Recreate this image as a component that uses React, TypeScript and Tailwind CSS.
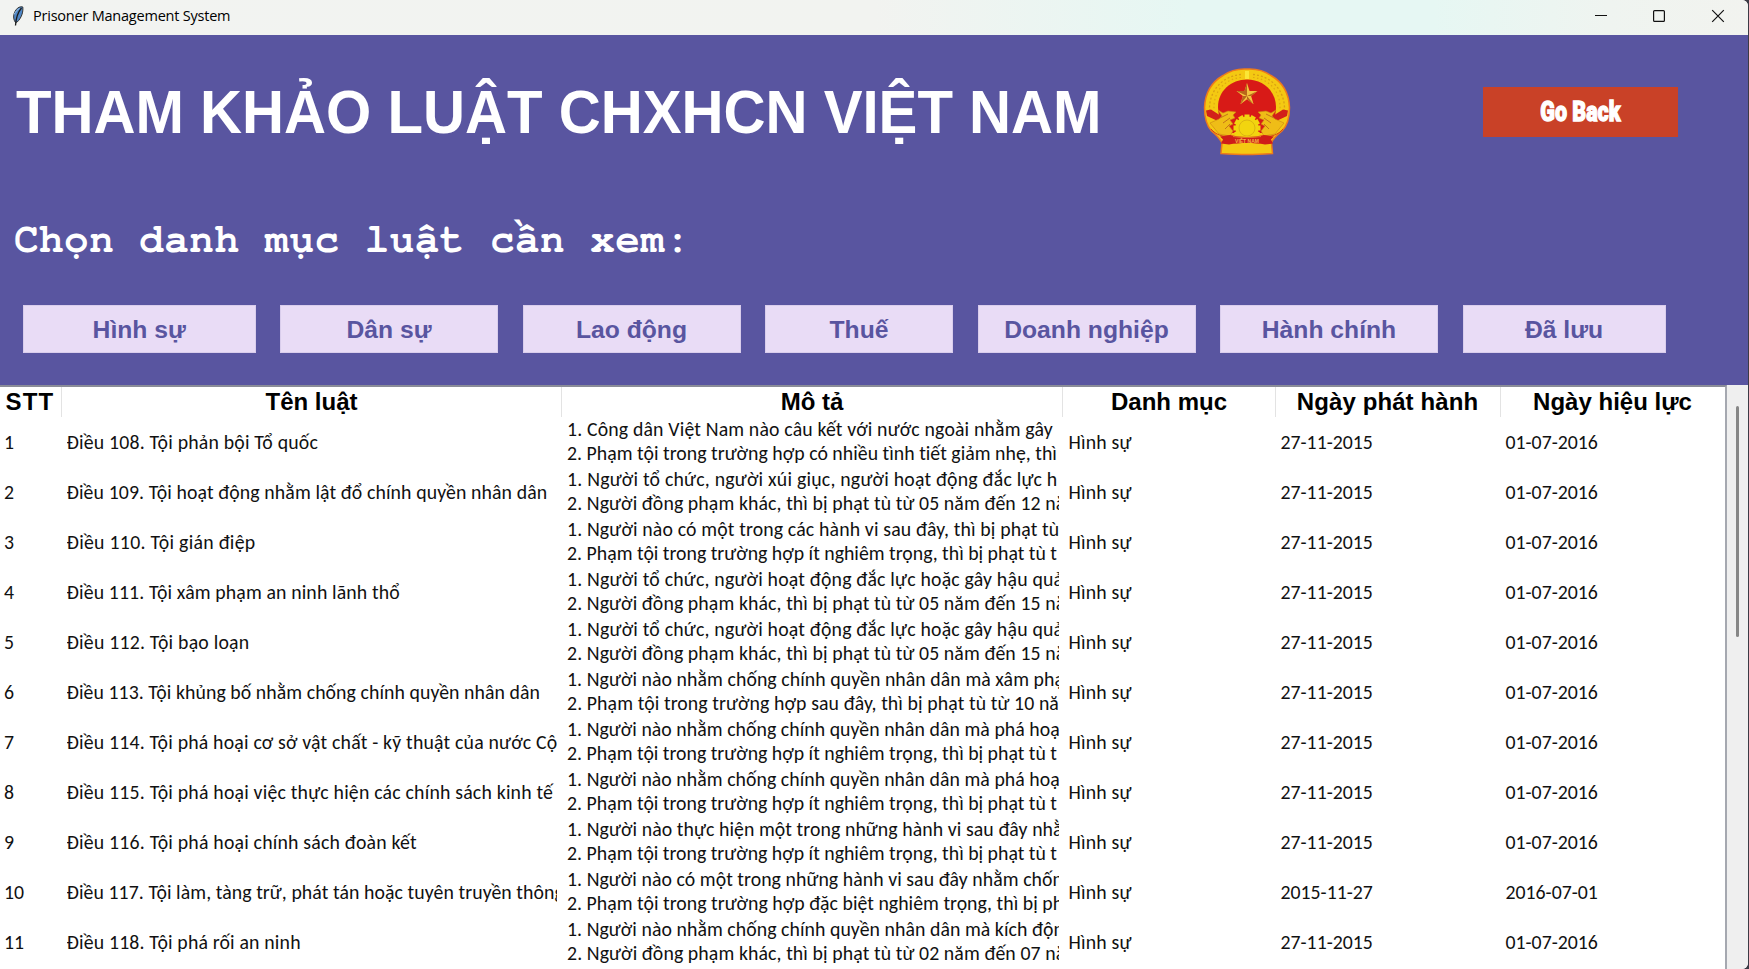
type Law = {
  name: string;
  nameFit: string;
  desc: [string, string];
  descFit: [string, string];
  issued?: string;
  effective?: string;
};

const MINOR = "2. Phạm tội trong trường hợp ít nghiêm trọng, thì bị phạt tù t";

const laws: Law[] = [
  {
    name: "Điều 108. Tội phản bội Tổ quốc",
    nameFit: "tracking-[0.19px]",
    desc: [
      "1. Công dân Việt Nam nào câu kết với nước ngoài nhằm gây",
      "2. Phạm tội trong trường hợp có nhiều tình tiết giảm nhẹ, thì",
    ],
    descFit: ["tracking-[0.16px]", "tracking-[0.03px]"],
  },
  {
    name: "Điều 109. Tội hoạt động nhằm lật đổ chính quyền nhân dân",
    nameFit: "tracking-[0.11px]",
    desc: [
      "1. Người tổ chức, người xúi giục, người hoạt động đắc lực h",
      "2. Người đồng phạm khác, thì bị phạt tù từ 05 năm đến 12 nă",
    ],
    descFit: ["tracking-[0.22px]", "tracking-[0.1px]"],
  },
  {
    name: "Điều 110. Tội gián điệp",
    nameFit: "tracking-[0.29px]",
    desc: ["1. Người nào có một trong các hành vi sau đây, thì bị phạt tù", MINOR],
    descFit: ["tracking-[0.15px]", "tracking-[0.01px]"],
  },
  {
    name: "Điều 111. Tội xâm phạm an ninh lãnh thổ",
    nameFit: "tracking-[0.13px]",
    desc: [
      "1. Người tổ chức, người hoạt động đắc lực hoặc gây hậu quả",
      "2. Người đồng phạm khác, thì bị phạt tù từ 05 năm đến 15 nă",
    ],
    descFit: ["tracking-[0.2px]", "tracking-[0.1px]"],
  },
  {
    name: "Điều 112. Tội bạo loạn",
    nameFit: "tracking-[0.22px]",
    desc: [
      "1. Người tổ chức, người hoạt động đắc lực hoặc gây hậu quả",
      "2. Người đồng phạm khác, thì bị phạt tù từ 05 năm đến 15 nă",
    ],
    descFit: ["tracking-[0.2px]", "tracking-[0.1px]"],
  },
  {
    name: "Điều 113. Tội khủng bố nhằm chống chính quyền nhân dân",
    nameFit: "tracking-[0.07px]",
    desc: [
      "1. Người nào nhằm chống chính quyền nhân dân mà xâm phạ",
      "2. Phạm tội trong trường hợp sau đây, thì bị phạt tù từ 10 nă",
    ],
    descFit: ["tracking-[0.07px]", "tracking-[0.1px]"],
  },
  {
    name: "Điều 114. Tội phá hoại cơ sở vật chất - kỹ thuật của nước Cộ",
    nameFit: "tracking-[0.19px]",
    desc: ["1. Người nào nhằm chống chính quyền nhân dân mà phá hoạ", MINOR],
    descFit: ["tracking-[0.05px]", "tracking-[0.01px]"],
  },
  {
    name: "Điều 115. Tội phá hoại việc thực hiện các chính sách kinh tế",
    nameFit: "tracking-[0.2px]",
    desc: ["1. Người nào nhằm chống chính quyền nhân dân mà phá hoạ", MINOR],
    descFit: ["tracking-[0.05px]", "tracking-[0.01px]"],
  },
  {
    name: "Điều 116. Tội phá hoại chính sách đoàn kết",
    nameFit: "tracking-[0.2px]",
    desc: ["1. Người nào thực hiện một trong những hành vi sau đây nhằ", MINOR],
    descFit: ["tracking-[0.08px]", "tracking-[0.01px]"],
  },
  {
    name: "Điều 117. Tội làm, tàng trữ, phát tán hoặc tuyên truyền thông",
    nameFit: "tracking-[0.08px]",
    desc: [
      "1. Người nào có một trong những hành vi sau đây nhằm chốn",
      "2. Phạm tội trong trường hợp đặc biệt nghiêm trọng, thì bị ph",
    ],
    descFit: ["tracking-[0.06px]", "tracking-[0.03px]"],
    issued: "2015-11-27",
    effective: "2016-07-01",
  },
  {
    name: "Điều 118. Tội phá rối an ninh",
    nameFit: "tracking-[0.17px]",
    desc: [
      "1. Người nào nhằm chống chính quyền nhân dân mà kích độn",
      "2. Người đồng phạm khác, thì bị phạt tù từ 02 năm đến 07 nă",
    ],
    descFit: ["tracking-[0.06px]", "tracking-[0.1px]"],
  },
];

const categories = [
  { label: "Hình sự", box: "w-[232.5px]" },
  { label: "Dân sự", box: "w-[218px]" },
  { label: "Lao động", box: "w-[218px]" },
  { label: "Thuế", box: "w-[188px]" },
  { label: "Doanh nghiệp", box: "w-[218px]" },
  { label: "Hành chính", box: "w-[218px]" },
  { label: "Đã lưu", box: "w-[203px]" },
];

const columns = [
  { label: "STT", size: "text-[24px] tracking-[1.2px] pr-[1px]" },
  { label: "Tên luật", size: "text-[24px]" },
  { label: "Mô tả", size: "text-[24px]" },
  { label: "Danh mục", size: "text-[24px]" },
  { label: "Ngày phát hành", size: "text-[24px] tracking-[0.1px] pr-[1px]" },
  { label: "Ngày hiệu lực", size: "text-[24px] pr-[1px]" },
];

const GRID = "grid grid-cols-[62px_500px_501px_213px_225px_225px]";

function Feather() {
  return (
    <svg className="ml-[11px] h-[20px] w-[14px]" viewBox="0 0 14 20">
      <path d="M4.5 16.500C1.200 12 2.500 6 6.500 2.200 8.500.6 11 .6 11.800 1c.6 5-1.300 11-5.600 15z" fill="#4f86c6" stroke="#333" strokeWidth="1" />
      <path d="M10.500 2C7 6 5 11 4.500 19.500" fill="none" stroke="#1b1b1b" strokeWidth="1.300" />
      <path d="M3.200 8.500C4.500 5.500 6.500 3.500 8.500 2.500" fill="none" stroke="#9cc4ea" strokeWidth="1" />
    </svg>
  );
}

function Emblem() {
  const teeth = Array.from({ length: 12 }, (_, i) => i * 30);
  return (
    <svg className="h-[88px] w-[88px]" viewBox="0 0 88 88">
      <path
        d="M44 1C36 .5 27 2.500 20 7.500 8 14.500 2 26.500 1.500 39.500c0 11 3 19 7 23.500 5 4 8.500 8 10.500 12l-1 10.500c8 .5 17 1 26 1s18-.5 25.500-1l-1-10.500c1-4 5.500-8 10.500-12C83.500 58.500 86.500 50.500 86.500 39.500 86 26.500 80 14.500 68 7.500 61 2.500 52 .5 44 1z"
        fill="#f4c912"
        stroke="#ee7a1c"
        strokeWidth="1.500"
      />
      <path d="M44 11.500C28 11.500 15 23 15 39c0 11 5 20 12 26h34c7-6 12-15 12-26 0-16-13-27.500-29-27.500z" fill="#d81a17" />
      <path d="M44 3v8" stroke="#fbe636" strokeWidth="4" />
      <path d="M38 6.500C20 8 6 22 6.500 42M50 6.500C68 8 82 22 81.500 42" fill="none" stroke="#d99f14" strokeWidth="1.300" strokeDasharray="2 2" />
      <path d="M38 9.500C22 11 10 23 11 42M50 9.500C66 11 78 23 77 42" fill="none" stroke="#e0a812" strokeWidth="1.200" strokeDasharray="1.500 2.500" />
      <path d="M3 42.500l5-1 14 9-3 4.500-15-7zM85 42.500l-5-1-14 9 3 4.500 15-7z" fill="#d2201a" />
      <path
        d="M15 42l5 3 5-2 8 1-3 3 2 3-5 2 3 4-4 2 4 5-3 5-11-2-9-11 9-4 3-3zM73 42l-5 3-5-2-8 1 3 3-2 3 5 2-3 4 4 2-4 5 3 5 11-2 9-11-9-4-3-3z"
        fill="#efbd17"
        stroke="#c98412"
        strokeWidth=".6"
      />
      <path d="M17 50l8-4M20 55l7-5M22 61l5-5M71 50l-8-4M68 55l-7-5M66 61l-5-5" stroke="#c4741a" strokeWidth="1" />
      <polygon points="44,15 46.5,22.900 54.500,22.900 48.100,27.900 50.600,36.300 44,31.300 37.400,36.300 39.900,27.900 33.500,22.900 41.500,22.900" fill="#f4c440" />
      <path d="M44 15v13l-2.500-5.100zM54.500 22.900L44 28l4.100-.1zM50.600 36.300L44 28v3.300zM37.400 36.300L44 28l-4.100-.1zM33.500 22.900L44 28l-2.500-5.100z" fill="#b9661b" />
      {teeth.map((a) => (
        <rect key={a} x="41.500" y="46.500" width="5" height="5" fill="#f2d50f" transform={`rotate(${a} 44 60)`} />
      ))}
      <circle cx="44" cy="60" r="11.500" fill="#f2d50f" />
      <circle cx="44" cy="60" r="8" fill="none" stroke="#dcb412" strokeWidth="1" />
      <path d="M8 61c5 6 12 8 18 7M80 61c-5 6-12 8-18 7" fill="none" stroke="#d2451a" strokeWidth="1" />
      <path d="M27 67c10 2.500 24 2.500 34 0l10 1.500-3 3 2 4-8 1c-11-2-25-2-36 0l-8-1 2-4-3-3z" fill="#cf1d19" />
      <path d="M30 68.500c9 1.500 19 1.500 28 0" fill="none" stroke="#e99a2c" strokeWidth=".7" />
      <text x="44" y="75" textAnchor="middle" fontFamily="Liberation Sans, sans-serif" fontWeight="700" fontSize="5" fill="#f3b445">
        VIỆT NAM
      </text>
    </svg>
  );
}

function WindowControls() {
  return (
    <svg className="ml-auto h-8 w-[160px]" viewBox="0 0 160 32" fill="none" stroke="#111" strokeWidth="1.200">
      <path d="M7 15.500h12" />
      <rect x="65.600" y="10.600" width="10.800" height="10.800" rx="1" />
      <path d="M124.200 10.200l11.600 11.600M135.800 10.200l-11.600 11.600" />
    </svg>
  );
}

export default function App() {
  return (
    <div className="flex h-[969px] w-[1749px] overflow-hidden bg-[#3c3b45]">
      <div className="flex h-[969px] w-[1748px] flex-col overflow-hidden rounded-tr-[6px] rounded-br-[6px] bg-white">
        <header className="flex h-[35px] shrink-0 items-center bg-[linear-gradient(90deg,#f2f3f1_0%,#f2f3f0_50%,#e6f7f3_68%,#e6f7f3_82%,#eff4f0_92%,#f2f3ef_100%)] pb-[3px]">
          <Feather />
          <span className="ml-[8px] pb-[1px] font-['Open_Sans','Noto_Sans',sans-serif] text-[14.5px] tracking-[-0.22px] text-black">
            Prisoner Management System
          </span>
          <WindowControls />
        </header>

        <section className="flex h-[350px] shrink-0 flex-col bg-[#5955a0]">
          <div className="flex h-[153px] items-center">
            <div className="w-[1203px] shrink-0 pl-[16px]">
              <h1 className="origin-left scale-x-[0.938] whitespace-nowrap font-['Liberation_Sans',sans-serif] text-[62px] font-bold leading-none text-white">
                THAM KHẢO LUẬT CHXHCN VIỆT NAM
              </h1>
            </div>
            <Emblem />
            <button className="ml-[192px] flex h-[50px] w-[195px] items-center justify-center bg-[#c94127]">
              <span className="inline-block scale-x-[0.78] whitespace-nowrap font-['Roboto',sans-serif] text-[27.5px] font-black leading-none text-white [-webkit-text-stroke:1.3px_white]">
                Go Back
              </span>
            </button>
          </div>
          <h2 className="mt-[28px] h-[48px] whitespace-pre pl-[14px] font-['Nimbus_Mono_PS','FreeMono','Courier_10_Pitch','Liberation_Mono',monospace] text-[41px] font-bold leading-[48px] tracking-[0.45px] text-white">
            Chọn danh mục luật cần xem:
          </h2>
          <nav className="mt-[41px] flex gap-[24.5px] pl-[23px]">
            {categories.map((c) => (
              <button
                key={c.label}
                className={`${c.box} flex h-[48px] shrink-0 items-center justify-center border border-[#d9cdec] bg-[#e9dcf6] pt-[1px] font-['Liberation_Sans',sans-serif] text-[24.7px] font-bold text-[#5955a0]`}
              >
                {c.label}
              </button>
            ))}
          </nav>
        </section>

        <main className="flex min-h-0 flex-1">
          <div className="flex w-[1727px] shrink-0 flex-col overflow-hidden border-t-2 border-r-2 border-t-[#8a8c98] border-r-[#a5a8b0]">
            <div className={`${GRID} h-[30px] shrink-0`}>
              {columns.map((c) => (
                <div
                  key={c.label}
                  className={`${c.size} flex items-center justify-center whitespace-nowrap border-r border-[#e3e3e3] font-['Liberation_Sans',sans-serif] font-bold leading-none text-black`}
                >
                  {c.label}
                </div>
              ))}
            </div>
            {laws.map((law, i) => (
              <div
                key={law.name}
                className={`${GRID} h-[50px] shrink-0 items-center whitespace-nowrap pb-[1px] font-['Carlito','Lato','Noto_Sans',sans-serif] text-[19.8px] leading-[24px] text-[#111] [font-variant-ligatures:none]`}
              >
                <div className="pl-[4px]">{i + 1}</div>
                <div className={`${law.nameFit} ml-[4.5px] mr-[5px] overflow-hidden`}>{law.name}</div>
                <div className="ml-[5px] mr-[4px] overflow-hidden pb-[1px]">
                  <p className={law.descFit[0]}>{law.desc[0]}</p>
                  <p className={law.descFit[1]}>{law.desc[1]}</p>
                </div>
                <div className="pl-[5.5px] tracking-[0.2px]">Hình sự</div>
                <div className="pl-[4.5px]">{law.issued ?? "27-11-2015"}</div>
                <div className="pl-[4.5px]">{law.effective ?? "01-07-2016"}</div>
              </div>
            ))}
          </div>
          <div className="flex flex-1 justify-center bg-[#efefef] pt-[21px]">
            <div className="h-[231px] w-[3px] rounded-full bg-[#868686]" />
          </div>
        </main>
      </div>
    </div>
  );
}
